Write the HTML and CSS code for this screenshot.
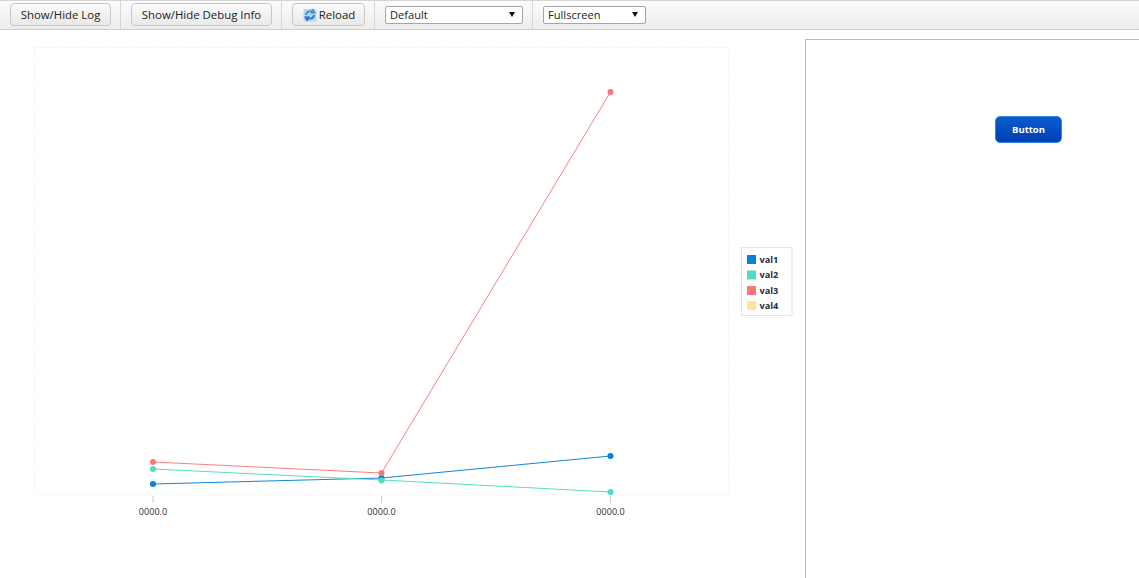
FILE: index.html
```html
<!DOCTYPE html>
<html lang="en">
<head>
<meta charset="utf-8">
<title>Report</title>
<link rel="stylesheet" href="styles.css">
</head>
<body>
<div class="toolbar">
  <div class="group"><button class="btn btn-log">Show/Hide Log</button></div>
  <div class="group"><button class="btn btn-debug">Show/Hide Debug Info</button></div>
  <div class="group">
    <button class="btn btn-reload">
      <svg class="reload-icon" viewBox="0 0 14 14" width="14" height="14">
        <rect x="0.500" y="1" width="13" height="12.500" rx="1.500" fill="#b5d8f2"/>
        <path d="M2 7 C2 3.500 5 2 8 2.600 L10 0.500 L13 5.500 L7 5.800 L8.200 4.400 C6.200 4 4.400 5 4 7 Z" fill="#3f95dc"/>
        <path d="M12 7 C12 10.500 9 12 6 11.400 L4 13.500 L1 8.500 L7 8.200 L5.800 9.600 C7.800 10 9.600 9 10 7 Z" fill="#2a78c8"/>
      </svg>
      <span class="btn-text">Reload</span>
    </button>
  </div>
  <div class="group"><div class="picker picker-theme"><span>Default</span><i class="arrow"></i></div></div>
  <div class="group group-last"><div class="picker picker-mode"><span>Fullscreen</span><i class="arrow"></i></div></div>
</div>
<div class="main">
  <div class="chart">
    <svg class="chart-svg" viewBox="0 30 805 548" width="805" height="548">
      <rect class="plot" x="34.500" y="47.500" width="694" height="447"/>
      <path class="tick" d="M153 496V503M381.500 496V503M610.500 496V503"/>
      <polyline class="line l1" points="153,484 381.500,478 610.500,456"/>
      <polyline class="line l2" points="153,469 381.500,480 610.500,492"/>
      <polyline class="line l3" points="153,462 381.500,473 610.500,92"/>
      <g class="d1"><circle cx="153" cy="484" r="3"/><circle cx="381.500" cy="478" r="3"/><circle cx="610.500" cy="456" r="3"/></g>
      <g class="d2"><circle cx="153" cy="469" r="3"/><circle cx="381.500" cy="480.500" r="3"/><circle cx="610.500" cy="492" r="3"/></g>
      <g class="d3"><circle cx="153" cy="462" r="3"/><circle cx="381.500" cy="473" r="3"/><circle cx="610.500" cy="92" r="3"/></g>
      <text class="tick-label" x="153" y="515">0000.0</text>
      <text class="tick-label" x="381.500" y="515">0000.0</text>
      <text class="tick-label" x="610.500" y="515">0000.0</text>
      <rect class="legend" x="741.500" y="247.500" width="50.500" height="68"/>
      <rect class="d1" x="747" y="255" width="9" height="9"/>
      <rect class="d2" x="747" y="270.500" width="9" height="9"/>
      <rect class="d3" x="747" y="286" width="9" height="9"/>
      <rect class="d4" x="747" y="301" width="9" height="9"/>
      <text class="legend-label" x="759.500" y="263">val1</text>
      <text class="legend-label" x="759.500" y="278">val2</text>
      <text class="legend-label" x="759.500" y="294">val3</text>
      <text class="legend-label" x="759.500" y="309">val4</text>
    </svg>
  </div>
  <div class="panel"><button class="action">Button</button></div>
</div>
</body>
</html>
```
FILE: styles.css
```css
* { box-sizing: border-box; }
html, body { margin: 0; height: 100%; overflow: hidden; background: #fff; }
body { font-family: "Open Sans", "Noto Sans", sans-serif; color: #222; }

.toolbar {
  display: flex;
  height: 30px;
  border-top: 1px solid #d4d4d4;
  border-bottom: 1px solid #cfcfcf;
  background: linear-gradient(#fcfcfc, #ececec);
}
.group {
  display: flex;
  align-items: center;
  padding: 0 9px 1px 10px;
  border-right: 1px solid #d6d6d6;
}
.group-last { border-right: 0; }

.btn {
  height: 23px;
  padding: 0;
  display: flex;
  align-items: center;
  justify-content: center;
  border: 1px solid #c8c8c8;
  border-radius: 4px;
  background: linear-gradient(#fbfbfb, #e9e9e9);
  font: 11.400px "Open Sans", sans-serif;
  color: #222;
}
.btn-log { width: 101px; }
.btn-debug { width: 141px; }
.btn-reload { width: 73px; gap: 2px; }
.btn-text { margin-right: -1px; }

.picker {
  height: 18px;
  display: flex;
  align-items: center;
  justify-content: space-between;
  padding: 0 6px 0 4px;
  background: #fff;
  border: 1px solid #a6a6a6;
  border-radius: 2px;
  font-size: 11.100px;
  color: #222;
}
.picker-theme { width: 138px; }
.picker-mode { width: 103px; }
.arrow {
  width: 0;
  height: 0;
  margin-right: 1px;
  border-left: 3px solid transparent;
  border-right: 3px solid transparent;
  border-top: 5px solid #111;
}

.main { display: flex; height: 548px; }
.chart { width: 805px; flex: none; }
.chart-svg { display: block; }
.plot { fill: #fff; stroke: #f4f4f4; stroke-dasharray: 4 2; }
.tick { stroke: #ccc; fill: none; }
.line { fill: none; stroke-width: 1; }
.l1 { stroke: #0f88d8; }
.l2 { stroke: #5cdcc0; }
.l3 { stroke: #fb8080; }
.d1 { fill: #0484d8; }
.d2 { fill: #4fdcc0; }
.d3 { fill: #fc7676; }
.d4 { fill: #ffe39a; }
.tick-label { font: 9.100px "Open Sans", sans-serif; fill: #333; text-anchor: middle; }
.legend { fill: #fff; stroke: #e4e4e4; }
.legend-label { font: bold 9.200px "Open Sans", sans-serif; fill: #2b2b3a; }

.panel {
  flex: 1;
  margin-top: 9px;
  padding: 76px 0 0 189px;
  border-top: 1px solid #b9b9b9;
  border-left: 1px solid #b9b9b9;
}
.action {
  display: block;
  width: 67px;
  height: 27px;
  padding: 0;
  border: 1px solid #2f86e6;
  border-radius: 5px;
  background: linear-gradient(#0a5ccc, #0040b4);
  color: #fff;
  font: bold 9.500px "Open Sans", sans-serif;
}
```
